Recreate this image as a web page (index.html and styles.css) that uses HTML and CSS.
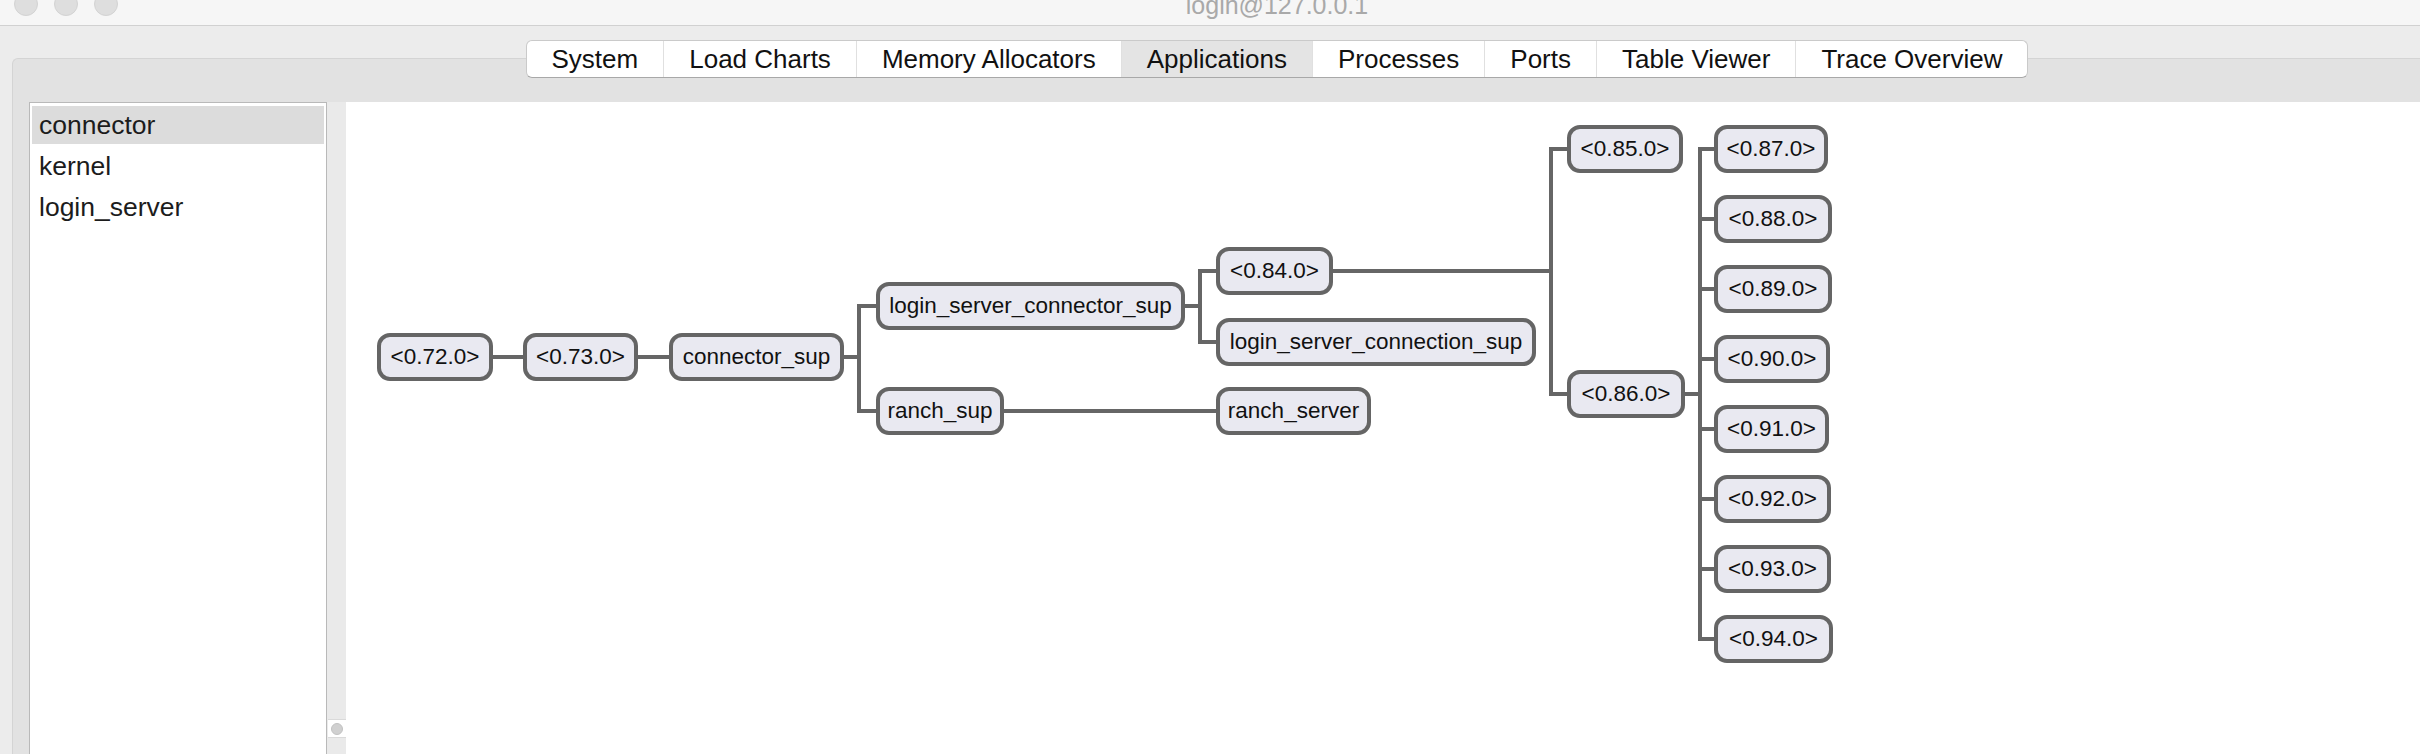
FILE: index.html
```html
<!DOCTYPE html>
<html lang="en">
<head>
    <meta charset="UTF-8">
    <title>login@127.0.0.1</title>
    <link rel="stylesheet" href="styles.css">
</head>
<body>
    <div class="window">
        <div class="titlebar">
            <div class="lights"><span></span><span></span><span></span></div>
            <div class="title">login@127.0.0.1</div>
        </div>
        <div class="main">
            <div class="tabs">
                <div class="tabbar">
                    <div class="tab">System</div>
                    <div class="tab">Load Charts</div>
                    <div class="tab">Memory Allocators</div>
                    <div class="tab active">Applications</div>
                    <div class="tab">Processes</div>
                    <div class="tab">Ports</div>
                    <div class="tab">Table Viewer</div>
                    <div class="tab">Trace Overview</div>
                </div>
            </div>
            <div class="pane">
                <div class="list">
                    <div class="item selected">connector</div>
                    <div class="item">kernel</div>
                    <div class="item">login_server</div>
                </div>
                <div class="splitter"><div class="grip"><span></span></div></div>
                <div class="canvas">
                    <svg class="links" width="2200" height="660">
                        <path d="M89 255 H513"/>
                        <path d="M550 204 H513 V309 H550"/>
                        <path d="M600 309 H900"/>
                        <path d="M700 204 H854"/>
                        <path d="M890 169 H854 V240 H890"/>
                        <path d="M930 169 H1205"/>
                        <path d="M1250 47 H1205 V292 H1250"/>
                        <path d="M1280 292 H1354"/>
                        <path d="M1400 47 H1354 V537 H1400"/>
                        <path d="M1354 117 H1400 M1354 187 H1400 M1354 257 H1400 M1354 327 H1400 M1354 397 H1400 M1354 467 H1400"/>
                    </svg>
                    <div class="node" style="left:31px;top:231px;width:116px">&lt;0.72.0&gt;</div>
                    <div class="node" style="left:177px;top:231px;width:115px">&lt;0.73.0&gt;</div>
                    <div class="node" style="left:323px;top:231px;width:175px">connector_sup</div>
                    <div class="node" style="left:530px;top:180px;width:309px">login_server_connector_sup</div>
                    <div class="node" style="left:530px;top:285px;width:128px">ranch_sup</div>
                    <div class="node" style="left:870px;top:145px;width:117px">&lt;0.84.0&gt;</div>
                    <div class="node" style="left:870px;top:216px;width:320px">login_server_connection_sup</div>
                    <div class="node" style="left:870px;top:285px;width:155px">ranch_server</div>
                    <div class="node" style="left:1221px;top:23px;width:116px">&lt;0.85.0&gt;</div>
                    <div class="node" style="left:1221px;top:268px;width:118px">&lt;0.86.0&gt;</div>
                    <div class="node" style="left:1368px;top:23px;width:114px">&lt;0.87.0&gt;</div>
                    <div class="node" style="left:1368px;top:93px;width:118px">&lt;0.88.0&gt;</div>
                    <div class="node" style="left:1368px;top:163px;width:118px">&lt;0.89.0&gt;</div>
                    <div class="node" style="left:1368px;top:233px;width:116px">&lt;0.90.0&gt;</div>
                    <div class="node" style="left:1368px;top:303px;width:115px">&lt;0.91.0&gt;</div>
                    <div class="node" style="left:1368px;top:373px;width:117px">&lt;0.92.0&gt;</div>
                    <div class="node" style="left:1368px;top:443px;width:117px">&lt;0.93.0&gt;</div>
                    <div class="node" style="left:1368px;top:513px;width:119px">&lt;0.94.0&gt;</div>
                </div>
            </div>
        </div>
    </div>
</body>
</html>
```

FILE: styles.css
```css
body { margin: 0; width: 2420px; height: 754px; overflow: hidden; background: #ececec; font-family: "Liberation Sans", Arial, sans-serif; }
.window { width: 2554px; }

.titlebar { display: grid; grid-template-rows: 25px; align-items: end; height: 25px; overflow: hidden; background: #f6f6f6; border-bottom: 1px solid #d1d1d1; }
.lights { grid-area: 1 / 1; justify-self: start; display: flex; gap: 16px; padding-left: 14px; margin-bottom: 9px; }
.lights span { width: 24px; height: 24px; box-sizing: border-box; border-radius: 50%; background: #dedede; border: 1px solid #d3d3d3; }
.title { grid-area: 1 / 1; justify-self: center; font-size: 25px; line-height: 25px; color: #a9a9a9; margin-bottom: 7px; }

.main { height: 728px; box-sizing: border-box; padding: 14px 12px 0; background: #ececec; }
.tabs { display: flex; justify-content: center; position: relative; z-index: 1; margin-bottom: -20px; }
.tabbar { display: flex; background: #fff; border: 1px solid #cacaca; border-bottom-color: #a8a8a8; border-radius: 6px; overflow: hidden; }
.tab { padding: 0 25px; font-size: 26px; line-height: 36px; color: #111; border-left: 1px solid #e0e0e0; }
.tab:first-child { border-left: none; }
.tab.active { background: #e4e4e4; }

.pane { display: flex; height: 800px; padding: 43px 0 0 16px; background: #e2e2e2; border: 1px solid #d4d4d4; border-right: none; border-radius: 6px 0 0 0; }
.list { width: 298px; box-sizing: border-box; padding: 3px 2px; background: #fff; border: 1px solid #b9b9b9; }
.item { height: 38px; margin-bottom: 3px; padding-left: 7px; font-size: 26.5px; line-height: 38px; color: #1c1c1c; }
.item.selected { background: #dcdcdc; }

.splitter { width: 19px; padding-top: 617px; background: #eaeaea; }
.grip { display: flex; align-items: center; justify-content: center; height: 17px; margin-left: 1px; background: #fff; border-top: 1px solid #dadada; border-bottom: 1px solid #dadada; }
.grip span { width: 12px; height: 12px; box-sizing: border-box; border-radius: 50%; background: #d0d0d0; border: 1px solid #c2c2c2; }

.canvas { flex: 1; position: relative; background: #fff; }
.links { position: absolute; left: 0; top: 0; }
.links path { fill: none; stroke: #666; stroke-width: 4; stroke-linejoin: miter; }
.node { position: absolute; height: 48px; box-sizing: border-box; border: 4px solid #656565; border-radius: 13px; background: #e9e9f1; font-size: 22.5px; line-height: 40px; text-align: center; color: #111; white-space: nowrap; }
```
